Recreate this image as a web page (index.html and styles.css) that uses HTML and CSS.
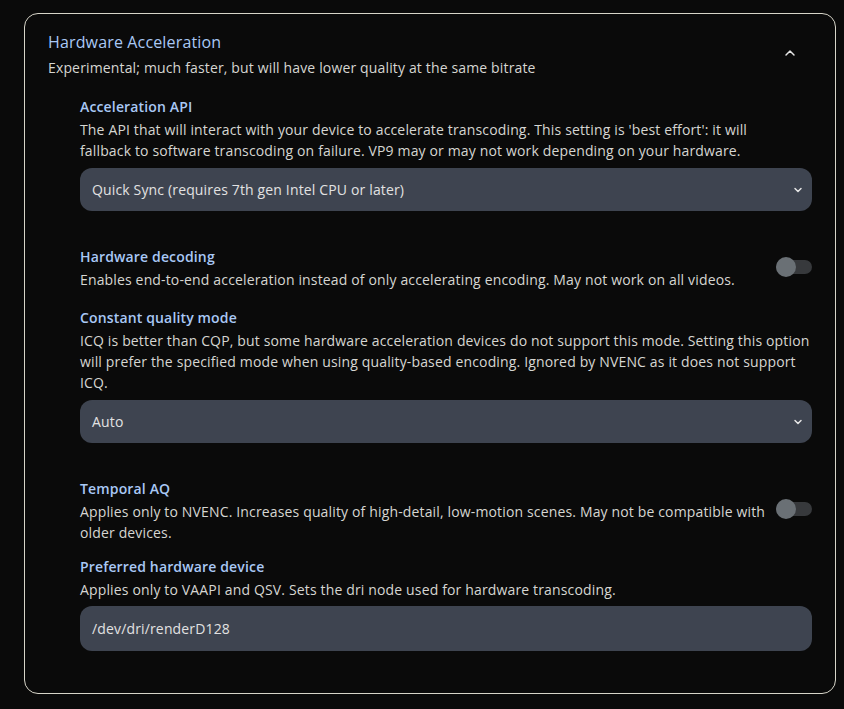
FILE: index.html
```html
<!DOCTYPE html>
<html lang="en">
<head>
    <meta charset="UTF-8">
    <meta name="viewport" content="width=device-width, initial-scale=1.0">
    <title>Hardware Acceleration</title>
    <link rel="stylesheet" href="styles.css">
</head>
<body>
    <div class="card">
        <div class="card-head">
            <div>
                <h2 class="card-title">Hardware Acceleration</h2>
                <p class="card-sub">Experimental; much faster, but will have lower quality at the same bitrate</p>
            </div>
            <svg class="chevron" width="16" height="16" viewBox="0 0 24 24"><path d="M6 15l6-6 6 6" fill="none" stroke="#e5e5e5" stroke-width="2.2" stroke-linecap="round" stroke-linejoin="round"/></svg>
        </div>

        <div class="settings">
            <div class="field">
                <div class="label">Acceleration API</div>
                <p class="desc">The API that will interact with your device to accelerate transcoding. This setting is 'best effort': it will<br>fallback to software transcoding on failure. VP9 may or may not work depending on your hardware.</p>
                <div class="select">
                    <span>Quick Sync (requires 7th gen Intel CPU or later)</span>
                    <svg width="12" height="12" viewBox="0 0 24 24"><path d="M6 9l6 6 6-6" fill="none" stroke="#e5e5e5" stroke-width="3" stroke-linecap="round" stroke-linejoin="round"/></svg>
                </div>
            </div>

            <div class="field toggle-row wide">
                <div>
                    <div class="label">Hardware decoding</div>
                    <p class="desc">Enables end-to-end acceleration instead of only accelerating encoding. May not work on all videos.</p>
                </div>
                <div class="toggle"><span class="knob"></span></div>
            </div>

            <div class="field">
                <div class="label">Constant quality mode</div>
                <p class="desc">ICQ is better than CQP, but some hardware acceleration devices do not support this mode. Setting this option will prefer the specified mode when using quality-based encoding. Ignored by NVENC as it does not support ICQ.</p>
                <div class="select">
                    <span>Auto</span>
                    <svg width="12" height="12" viewBox="0 0 24 24"><path d="M6 9l6 6 6-6" fill="none" stroke="#e5e5e5" stroke-width="3" stroke-linecap="round" stroke-linejoin="round"/></svg>
                </div>
            </div>

            <div class="field toggle-row">
                <div>
                    <div class="label">Temporal AQ</div>
                    <p class="desc">Applies only to NVENC. Increases quality of high-detail, low-motion scenes. May not be compatible with older devices.</p>
                </div>
                <div class="toggle"><span class="knob"></span></div>
            </div>

            <div class="field last">
                <div class="label">Preferred hardware device</div>
                <p class="desc">Applies only to VAAPI and QSV. Sets the dri node used for hardware transcoding.</p>
                <div class="input">/dev/dri/renderD128</div>
            </div>
        </div>
    </div>
</body>
</html>
```

FILE: styles.css
```css
body {
    margin: 0;
    padding: 13px 8px 17px 24px;
    background: #0a0a0a;
    color: #d6d6d2;
    font-family: "Open Sans", "Noto Sans", sans-serif;
    font-size: 14px;
    letter-spacing: 0.15px;
}
.card {
    width: 812px;
    box-sizing: border-box;
    border: 1px solid #d6d4c8;
    border-radius: 14px;
    padding: 17px 23px 42px 23px;
}
.card-head {
    display: flex;
    justify-content: space-between;
    align-items: flex-start;
}
.card-title {
    margin: 0;
    font-size: 16px;
    font-weight: 500;
    color: #a9c8f5;
    line-height: 22px;
}
.card-sub {
    margin: 5px 0 0;
    line-height: 20px;
}
.chevron {
    margin: 14px 14px 0 0;
}
.settings {
    padding: 19px 0 0 32px;
}
.field {
    margin-bottom: 14px;
}
.field.wide {
    margin-bottom: 18px;
}
.field.last {
    margin-bottom: 0;
}
.label {
    color: #a9c8f5;
    font-weight: 600;
    line-height: 20px;
}
.desc {
    margin: 2px 0 0;
    line-height: 21px;
}
.select, .input {
    margin-top: 7px;
    background: #3e4450;
    border-radius: 12px;
    height: 43px;
    display: flex;
    align-items: center;
    justify-content: space-between;
    padding: 0 8px 0 12px;
    color: #e2e2e2;
}
.input {
    height: 45px;
    margin-top: 6px;
}
.field:has(.select) {
    margin-bottom: 36px;
}
.toggle-row {
    display: flex;
    align-items: center;
    justify-content: space-between;
    gap: 8px;
}
.toggle {
    flex: none;
    position: relative;
    width: 36px;
    height: 14px;
    margin-top: -4px;
    background: #37393c;
    border-radius: 7px;
}
.knob {
    position: absolute;
    left: 0;
    top: -3px;
    width: 20px;
    height: 20px;
    border-radius: 50%;
    background: #6a7075;
}
```
